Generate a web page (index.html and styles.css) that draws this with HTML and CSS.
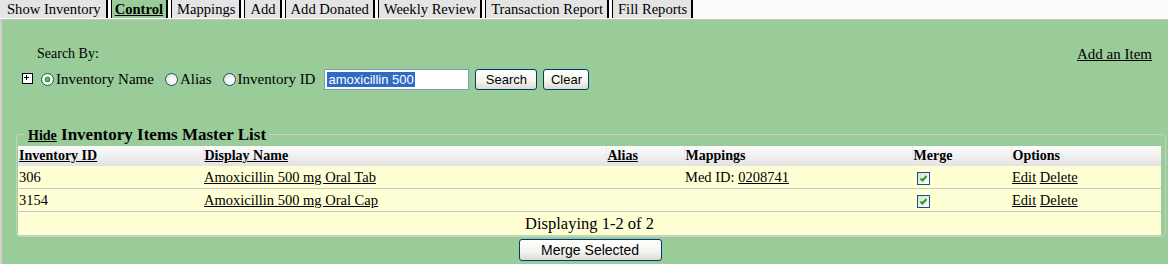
FILE: index.html
```html
<!DOCTYPE html>
<html>
<head>
<meta charset="utf-8">
<link rel="stylesheet" href="styles.css">
</head>
<body>
<div class="tabs">
  <span class="tab first">Show Inventory</span>
  <span class="tab active">Control</span>
  <span class="tab">Mappings</span>
  <span class="tab">Add</span>
  <span class="tab">Add Donated</span>
  <span class="tab">Weekly Review</span>
  <span class="tab">Transaction Report</span>
  <span class="tab">Fill Reports</span>
</div>
<div class="panel">
  <div class="search-head">
    <span class="search-label">Search By:</span>
    <a class="add-item">Add an Item</a>
  </div>
  <div class="search-row">
    <span class="plus"><svg width="9" height="9" viewBox="0 0 9 9"><path d="M2 4.5h5M4.5 2v5" stroke="#000" stroke-width="1" fill="none"/></svg></span>
    <label class="opt"><span class="radio checked"></span>Inventory Name</label>
    <label class="opt"><span class="radio"></span>Alias</label>
    <label class="opt"><span class="radio"></span>Inventory ID</label>
    <div class="textbox"><span class="sel">amoxicillin 500</span></div>
    <span class="btn search">Search</span>
    <span class="btn clear">Clear</span>
  </div>
  <div class="fieldset">
    <div class="legend"><a class="hide">Hide</a> Inventory Items Master List</div>
    <table class="grid">
      <colgroup>
        <col class="c1"><col class="c2"><col class="c3"><col class="c4"><col class="c5"><col class="c6">
      </colgroup>
      <thead>
        <tr>
          <th><a>Inventory ID</a></th>
          <th><a>Display Name</a></th>
          <th><a>Alias</a></th>
          <th>Mappings</th>
          <th>Merge</th>
          <th>Options</th>
        </tr>
      </thead>
      <tbody>
        <tr>
          <td>306</td>
          <td><a>Amoxicillin 500 mg Oral Tab</a></td>
          <td></td>
          <td>Med ID: <a>0208741</a></td>
          <td><span class="check"><svg width="11" height="11" viewBox="0 0 11 11"><path d="M2.5 5.5l2 2 4-4.5" stroke="#21a121" stroke-width="2" fill="none"/></svg></span></td>
          <td><a>Edit</a> <a>Delete</a></td>
        </tr>
        <tr>
          <td>3154</td>
          <td><a>Amoxicillin 500 mg Oral Cap</a></td>
          <td></td>
          <td></td>
          <td><span class="check"><svg width="11" height="11" viewBox="0 0 11 11"><path d="M2.5 5.5l2 2 4-4.5" stroke="#21a121" stroke-width="2" fill="none"/></svg></span></td>
          <td><a>Edit</a> <a>Delete</a></td>
        </tr>
        <tr class="foot">
          <td colspan="6">Displaying 1-2 of 2</td>
        </tr>
      </tbody>
    </table>
  </div>
  <div class="merge-row"><span class="btn merge">Merge Selected</span></div>
</div>
</body>
</html>
```
FILE: styles.css
```css
html, body {
  margin: 0;
  padding: 0;
}
body {
  background: #fbfbfe;
  font-family: "Liberation Serif", "DejaVu Serif", serif;
  color: #000;
  width: 1168px;
  height: 264px;
  overflow: hidden;
}
a {
  color: #000;
  text-decoration: underline;
}
.tabs {
  display: flex;
  height: 19px;
  align-items: stretch;
}
.tab {
  background: #e4e4e4;
  font-size: 14.6px;
  line-height: 18px;
  padding: 0 4px 0 5px;
  border-left: 1px solid #000;
  border-right: 2px solid #000;
  margin-right: 3px;
  height: 18px;
  white-space: nowrap;
}
.tab.first {
  border-left: none;
  padding-left: 7px;
  padding-right: 5px;
}
.tab.active {
  background: #99cc99;
  font-weight: bold;
  text-decoration: underline;
  padding-right: 3px;
  padding-left: 3px;
}
.panel {
  background: #99cc99;
  border-top: 1px solid #c4c4c4;
  border-left: 2px solid #d0d0d0;
  height: 245px;
  box-sizing: border-box;
  padding-top: 26px;
}
.search-head {
  display: flex;
  justify-content: space-between;
  align-items: center;
  padding: 0 16px 0 35px;
  font-size: 14px;
  height: 16px;
}
.add-item {
  font-size: 15px;
}
.search-row {
  display: flex;
  align-items: center;
  margin-top: 6px;
  padding-left: 20px;
  height: 23px;
  font-size: 15px;
}
.plus {
  width: 9px;
  height: 9px;
  border: 1px solid #000;
  background: #fff;
  display: inline-flex;
  box-sizing: content-box;
  margin-right: 8px;
  margin-top: -2px;
}
.plus svg { display: block; margin: -1px 0 0 -1px; }
.opt {
  display: inline-flex;
  align-items: center;
  margin-right: 11px;
}
.radio {
  width: 11px;
  height: 11px;
  border: 1px solid #1c5180;
  border-radius: 50%;
  background: radial-gradient(circle at 65% 65%, #fff 0%, #f2f2f2 45%, #d4d4ce 100%);
  margin-right: 2px;
  display: inline-block;
}
.radio.checked {
  background: radial-gradient(circle at 50% 50%, #5fd35f 0, #21a121 2.5px, #f2f2f2 3.2px, #fff 4.5px, #d4d4ce 100%);
}
.textbox {
  width: 141px;
  height: 19px;
  border: 1px solid #7f9db9;
  background: #fff;
  margin-left: -2px;
  display: flex;
  align-items: center;
  padding-left: 2px;
  font-family: "Liberation Sans", Arial, sans-serif;
  font-size: 13px;
}
.sel {
  background: #316ac5;
  color: #fff;
  line-height: 15px;
  padding: 0 1px;
}
.btn {
  display: inline-flex;
  align-items: center;
  justify-content: center;
  height: 21px;
  box-sizing: border-box;
  border: 1px solid #003c74;
  border-radius: 3px;
  background: linear-gradient(#ffffff, #f4f4f0 60%, #dcdad0);
  font-family: "Liberation Sans", Arial, sans-serif;
  font-size: 13px;
  padding: 0;
  margin-left: 6px;
  color: #000;
}
.btn.search { width: 62px; }
.btn.clear { width: 46px; }
.fieldset {
  margin: 43px 0 0 14px;
  width: 1150px;
  box-sizing: border-box;
  border: 1px solid #cfcfc0;
  border-radius: 4px;
  padding: 0 3px 0 1px;
}
.legend {
  margin: -10px 0 0 6px;
  padding: 0 3px 0 4px;
  background: #99cc99;
  display: block;
  width: fit-content;
  font-weight: bold;
  font-size: 17px;
  line-height: 20px;
  height: 21px;
}
.hide {
  font-size: 14px;
}
.grid {
  border-collapse: collapse;
  width: 1143px;
  table-layout: fixed;
  font-size: 14.5px;
}
.c1 { width: 185px; }
.c2 { width: 403px; }
.c3 { width: 78px; }
.c4 { width: 228px; }
.c5 { width: 99px; }
.c6 { width: 150px; }
.grid th {
  height: 20px;
  padding: 0 1px;
  text-align: left;
  font-weight: bold;
  font-size: 14px;
  background: linear-gradient(#fdfdfd, #e2e2e2);
  border-left: 1px solid #e8e8e8;
  vertical-align: middle;
}
.grid th:first-child { border-left: none; }
.grid td {
  background: #ffffd5;
  height: 22px;
  padding: 0 1px;
  border-bottom: 1px solid #c8c8c8;
  vertical-align: middle;
  white-space: nowrap;
}
.grid tr.foot td {
  text-align: center;
  font-size: 16.5px;
  height: 23px;
  border-bottom: 1px solid #bcd8b8;
}
.check {
  display: inline-flex;
  width: 11px;
  height: 11px;
  border: 1px solid #1c5180;
  background: linear-gradient(135deg, #dcdcd6, #fff);
  margin-left: 4px;
  vertical-align: middle;
}
.merge-row {
  display: flex;
  justify-content: center;
  padding-left: 10px;
  margin-top: 2px;
}
.btn.merge {
  width: 143px;
  height: 22px;
  margin: 0;
  font-size: 14px;
}
```
